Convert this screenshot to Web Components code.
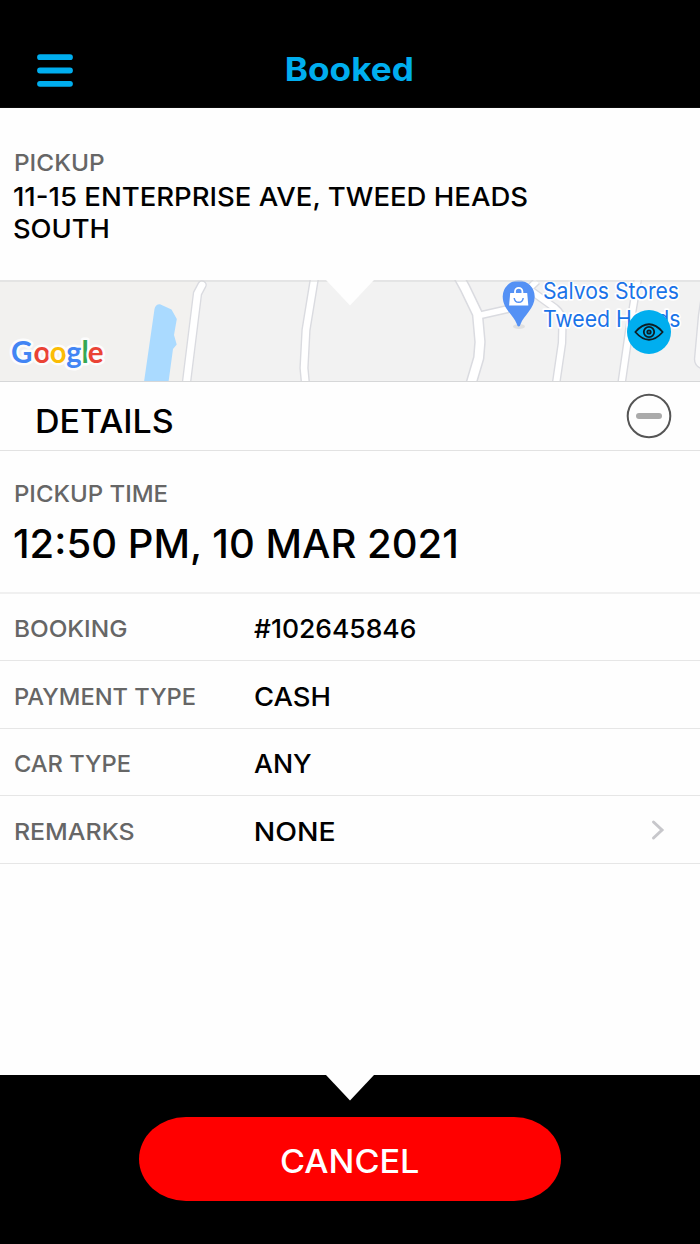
<!DOCTYPE html>
<html lang="en">
<head>
<meta charset="utf-8">
<title>Booked</title>
<style>
html, body { margin: 0; background: #fefefe; }
body { font-family: Inter, "Liberation Sans", sans-serif; font-weight: 500; color: #000; }
</style>
</head>
<body>
<booking-screen></booking-screen>
<script>
const define = (name, html, init) => {
  const tpl = document.createElement('template');
  tpl.innerHTML = html;
  customElements.define(name, class extends HTMLElement {
    connectedCallback() {
      if (this.shadowRoot) return;
      this.attachShadow({ mode: 'open' }).append(tpl.content.cloneNode(true));
      if (init) init.call(this, this.shadowRoot);
    }
  });
};

// One line of text whose ink spans exactly the given width.
const ctx = document.createElement('canvas').getContext('2d');
define('fit-text', `
<style>
:host { display: block; white-space: nowrap; font-size: var(--size); line-height: var(--line, 32px); height: var(--line, 32px); }
span { display: inline-block; transform-origin: 0 50%; }
</style><span></span>`, function (root) {
  const span = root.querySelector('span');
  const size = +this.getAttribute('size');
  const ink = +this.getAttribute('ink');
  this.style.setProperty('--size', size + 'px');
  this.style.width = ink + 'px';
  span.textContent = this.getAttribute('text');
  ctx.font = getComputedStyle(this).fontWeight + ' ' + size + 'px Inter, "Liberation Sans", sans-serif';
  const m = ctx.measureText(span.textContent);
  const k = ink / (m.actualBoundingBoxRight + m.actualBoundingBoxLeft);
  span.style.transform = 'translateX(' + m.actualBoundingBoxLeft * k + 'px) scaleX(' + k + ')';
});

define('app-header', `
<style>
:host { display: grid; grid-template-columns: 1fr auto 1fr; align-items: center; height: 108px; box-sizing: border-box; padding: 31px 37px 0; background: #000; color: #00aeef; font-weight: 700; border-bottom: 1px solid #0a0a0a; }
svg { display: block; margin-top: 2px; }
fit-text { margin: 2px 0 0 0; }
</style>
<svg width="36" height="33" viewBox="0 0 36 33"><path d="M3 3.2H33M3 16.5H33M3 29.8H33" stroke="#00aeef" stroke-width="5.8" stroke-linecap="round"/></svg>
<fit-text size="32" ink="125.5" text="Booked"></fit-text>`);

define('pickup-address', `
<style>
:host { display: block; height: 172px; box-sizing: border-box; padding: 38px 14px 0; }
.label { color: #666; --line: 33px; margin-left: 1px; }
.lines { margin-top: 1.500px; }
</style>
<fit-text class="label" size="23.5" ink="88.5" text="PICKUP"></fit-text>
<div class="lines">
<fit-text size="26" ink="513.5" text="11-15 ENTERPRISE AVE, TWEED HEADS"></fit-text>
<fit-text size="26" ink="94.5" text="SOUTH"></fit-text>
</div>`);

define('route-map', `
<style>
:host { display: block; position: relative; height: 102px; }
svg { display: block; overflow: visible; }
svg svg { overflow: hidden; }
.eye { position: absolute; left: 627px; top: 29.500px; width: 44px; height: 44px; border: 0; padding: 0; border-radius: 50%; background: #00aeef; }
text { font-family: Inter, sans-serif; }
.logo text { font-family: Lato, sans-serif; }
</style>
<svg width="700" height="102" viewBox="0 280 700 102">
  <svg x="0" y="280" width="700" height="102" viewBox="0 280 700 102">
  <rect y="280" width="700" height="102" fill="#f2f2f2"/>
  <path d="M0 280H202L198 293L187 382H0Z" fill="#f2f1ef"/>
  <path d="M144 382L154.500 309Q155.500 304 160 304.200L171.500 309.500L176.800 319L174 335L176.700 344.500L173 349L168.500 382Z" fill="#aadaff"/>
  <g fill="none" stroke-linejoin="round">
    <g stroke="#dadbe0">
      <path d="M202 285L197.500 293.500L186.300 384" stroke-width="9.500" stroke-linecap="round"/>
      <path d="M314.500 278L306 330L304 368L305.500 384" stroke-width="9.300"/>
      <path d="M459 277L465 288L477.500 314L480 342L478.700 358L471 384" stroke-width="11.500"/>
      <path d="M477 316L508 309L537 281" stroke-width="8.500"/>
      <path d="M530 290L555 308Q562.500 314 562.500 322L562 343L556 384" stroke-width="8.800"/>
      <path d="M638 278L630 325L621.500 384" stroke-width="8.800"/>
    </g>
    <g stroke="#fff">
      <path d="M202 285L197.500 293.500L186.300 384" stroke-width="6.800" stroke-linecap="round"/>
      <path d="M314.500 278L306 330L304 368L305.500 384" stroke-width="6.500"/>
      <path d="M459 277L465 288L477.500 314L480 342L478.700 358L471 384" stroke-width="8.500"/>
      <path d="M477 316L508 309L537 281" stroke-width="5.800"/>
      <path d="M530 290L555 308Q562.500 314 562.500 322L562 343L556 384" stroke-width="6"/>
      <path d="M638 278L630 325L621.500 384" stroke-width="6"/>
    </g>
    <path d="M702 292L698.500 315L694.500 359Q694.500 366 702 369" fill="#fafafa" stroke="#dadbe0" stroke-width="1.400"/>
  </g>
  <ellipse cx="519" cy="326.500" rx="6" ry="2.500" fill="#000" opacity=".07"/>
  <path d="M518.700 326.500Q517.400 326.500 516.800 324C513.500 315 502.700 309 502.700 296.500A16 16 0 0 1 534.700 296.500C534.700 309 523.900 315 520.600 324Q520 326.500 518.700 326.500Z" fill="#5491f5"/>
  <path d="M510.200 293H527.200L528.300 305.600H509.100Z" fill="#fff"/>
  <path d="M515 294V291.500A3.700 3.700 0 0 1 522.400 291.500V294" fill="none" stroke="#fff" stroke-width="1.800"/>
  <path d="M514.200 298Q514.700 302.300 518.700 302.300T523.200 298" fill="none" stroke="#5491f5" stroke-width="1.500"/>
  </svg>
  <g fill="#1a73e8" stroke="#fff" stroke-width="3.500" stroke-linejoin="round" paint-order="stroke" font-size="22.500" font-weight="400">
    <text x="543" y="299" textLength="136" lengthAdjust="spacingAndGlyphs">Salvos Stores</text>
    <text x="543" y="326.500" textLength="137.500" lengthAdjust="spacingAndGlyphs">Tweed Heads</text>
  </g>
  <g class="logo"><text y="362.500" font-size="29.500" font-weight="700" stroke="#fff" stroke-opacity=".85" stroke-width="5" stroke-linejoin="round" paint-order="stroke"><tspan x="11" fill="#4285f4">G</tspan><tspan x="33.600" fill="#ea4335">o</tspan><tspan x="49.800" fill="#fbbc05">o</tspan><tspan x="66.300" fill="#4285f4">g</tspan><tspan x="81.600" fill="#34a853">l</tspan><tspan x="87.800" fill="#ea4335">e</tspan></text></g>
  <path d="M0 281H700M0 381.500H700" stroke="#d6d7d8" stroke-width="1"/>
  <path d="M326 280H374L350 305.500Z" fill="#fefefe"/>
</svg>
<button class="eye" aria-label="Show map"><svg width="44" height="44" viewBox="0 0 44 44" fill="none" stroke="#0d1d24" stroke-width="1.800" stroke-linejoin="round"><path d="M8.300 22Q22 6.500 35.700 22Q22 37.500 8.300 22Z"/><circle cx="22" cy="22" r="5.200"/><circle cx="22" cy="22" r="1.700"/></svg></button>`);

define('section-header', `
<style>
:host { display: flex; justify-content: space-between; align-items: center; height: 69px; box-sizing: border-box; padding: 0 28px 0 36.500px; border-bottom: 1px solid #e2e2e2; }
fit-text { margin-top: 12px; }
</style>
<fit-text size="32" ink="136" text="DETAILS"></fit-text>
<svg width="46" height="46" viewBox="0 0 46 46"><circle cx="23" cy="23" r="21.300" fill="none" stroke="#555" stroke-width="2"/><path d="M13 23H33" stroke="#aaa" stroke-width="6" stroke-linecap="round"/></svg>`);

define('pickup-time', `
<style>
:host { display: block; height: 143px; box-sizing: border-box; padding: 27px 14px 0; border-bottom: 2px solid #f0f0f0; }
.label { color: #666; margin-left: .5px; }
.value { --line: 48px; margin-top: 9.500px; }
</style>
<fit-text class="label" size="23.3" ink="152" text="PICKUP TIME"></fit-text>
<fit-text class="value" size="39" ink="443" text="12:50 PM, 10 MAR 2021"></fit-text>`);

define('detail-row', `
<style>
:host { display: grid; grid-template-columns: 239.500px 1fr auto; align-items: center; box-sizing: border-box; height: 67px; padding: 4px 35px 0 14.500px; border-bottom: 1px solid #e6e6e6; }
.label { color: #666; }
.value { margin-left: var(--value-shift, 0); }
</style>
<fit-text class="label"></fit-text><fit-text class="value"></fit-text><slot></slot>`, function (root) {
  const fill = (sel, size, text, ink) => {
    const el = document.createElement('fit-text');
    el.className = sel;
    el.setAttribute('size', size);
    el.setAttribute('text', this.getAttribute(text));
    el.setAttribute('ink', this.getAttribute(ink));
    root.querySelector('.' + sel).replaceWith(el);
  };
  fill('label', 23.3, 'label', 'label-ink');
  fill('value', 26, 'value', 'value-ink');
});

define('action-bar', `
<style>
:host { display: flex; justify-content: center; position: relative; height: 169px; box-sizing: border-box; padding-top: 42px; background: #000; }
.notch { position: absolute; left: 326px; top: 0; }
button { display: flex; justify-content: center; align-items: center; width: 422px; height: 84px; padding: 6px 5px 0 0; border: 0; border-radius: 47px / 42px; background: #f00; color: #fff; font: inherit; }
</style>
<svg class="notch" width="48" height="26"><path d="M0 0H48L24 25.500Z" fill="#fefefe"/></svg>
<button><fit-text size="32.5" ink="137" text="CANCEL"></fit-text></button>`);

define('booking-screen', `
<style>
:host { display: flex; flex-direction: column; height: 1244px; width: 700px; overflow: hidden; }
:host > * { flex: none; }
detail-row.tall { height: 68px; }
action-bar { margin-top: auto; }
</style>
<app-header></app-header>
<pickup-address></pickup-address>
<route-map></route-map>
<section-header></section-header>
<pickup-time></pickup-time>
<detail-row label="BOOKING" label-ink="112" value="#102645846" value-ink="161"></detail-row>
<detail-row class="tall" label="PAYMENT TYPE" label-ink="180" value="CASH" value-ink="74.500" style="--value-shift:.6px"></detail-row>
<detail-row label="CAR TYPE" label-ink="115" value="ANY" value-ink="57.500"></detail-row>
<detail-row class="tall" label="REMARKS" label-ink="118.500" value="NONE" value-ink="79" style="--value-shift:1.600px"><svg width="14" height="22" viewBox="0 0 14 22" style="display:block;margin-top:-3px"><path d="M2.500 3L11 11L2.500 19" fill="none" stroke="#c7c7cb" stroke-width="3" stroke-linecap="round"/></svg></detail-row>
<action-bar></action-bar>`);
</script>
</body>
</html>
